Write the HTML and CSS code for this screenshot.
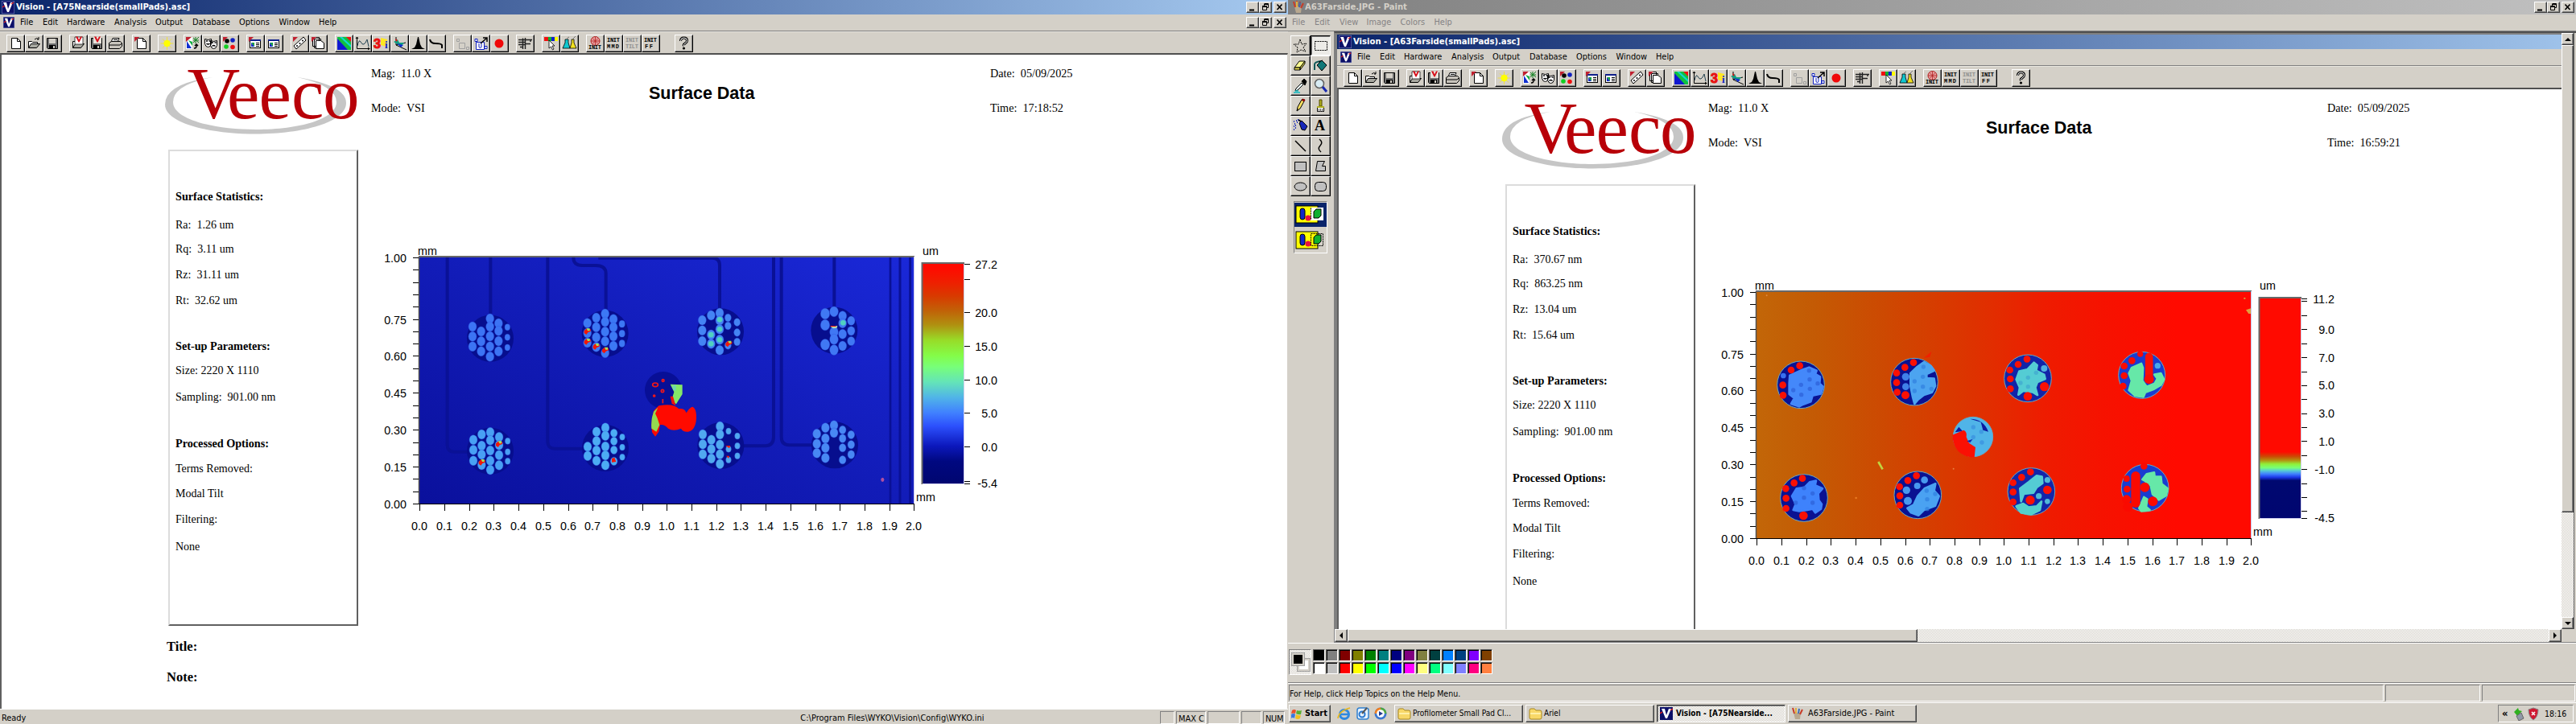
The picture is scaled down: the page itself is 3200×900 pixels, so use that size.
FILE: index.html
```html
<!DOCTYPE html>
<html lang="en">
<head>
<meta charset="utf-8">
<title>Vision and Paint</title>
<link rel="stylesheet" href="styles.css">
</head>
<body>
<div class="desktop">
  <div class="monitor" id="left-vision"></div>
  <div class="monitor">
    <div class="paint">
      <div class="titlebar inactive">
        <svg class="app-icon" viewBox="0 0 16 16"><path d="M3 7h9l-1 8H5z" fill="#b8a890"/><path d="M4 8L2 1M6 8V0M9 8l1-7M11 9l3-6" stroke-width="2" stroke="#c83c28"/><path d="M6 8V1" stroke="#e0b040" stroke-width="2"/><path d="M9 8l1-6" stroke="#3c6cb0" stroke-width="2"/></svg>
        <span class="title paint-title">A63Farside.JPG - Paint</span>
        <span class="winbtns" data-winbtns></span>
      </div>
      <div class="menubar paint-menu"><span class="m28">File</span><span class="m31">Edit</span><span class="m34">View</span><span class="m42">Image</span><span class="m42">Colors</span><span>Help</span></div>
      <div class="workspace">
        <div class="toolbox">
          <div class="tools" id="tools"></div>
          <div class="modes">
            <div class="mode on"><svg width="36" height="26" viewBox="0 0 36 26"><rect x="1" y="2" width="27" height="21" fill="#ff0" stroke="#000"/><rect x="19" y="4" width="16" height="16" fill="#fff"/><rect x="6" y="5" width="6" height="14" rx="3" fill="#1028c8" stroke="#000"/><path d="M23 9l3-3h6v8l-3 3h-6z" fill="#10b030" stroke="#000"/><circle cx="16" cy="17" r="3.6" fill="#e81040"/><path d="M19.500 4.500v15" stroke="#000" stroke-dasharray="2 1"/></svg></div>
            <div class="mode"><svg width="36" height="26" viewBox="0 0 36 26"><rect x="1" y="2" width="27" height="21" fill="#ff0" stroke="#000"/><rect x="6" y="5" width="6" height="14" rx="3" fill="#1028c8" stroke="#000"/><path d="M23 9l3-3h6v8l-3 3h-6z" fill="#10b030" stroke="#000"/><circle cx="16" cy="17" r="3.6" fill="#e81040"/><rect x="19.500" y="4.500" width="15" height="15" fill="none" stroke="#000" stroke-dasharray="2 1"/></svg></div>
          </div>
        </div>
        <div class="canvas">
          <div class="view" id="right-vision"></div>
          <div class="vscroll"><span class="sbtn"><i class="up"></i></span><span class="thumb"></span><span class="track"></span><span class="sbtn"><i class="down"></i></span></div>
          <div class="hscroll"><span class="sbtn"><i class="lt"></i></span><span class="thumb"></span><span class="track"></span><span class="sbtn"><i class="rt"></i></span></div>
          <div class="corner"></div>
        </div>
      </div>
      <div class="palette">
        <div class="current"><span class="bgc"></span><span class="fgc"></span></div>
        <div class="swatches" id="swatches"></div>
      </div>
      <div class="paint-status"><span class="help">For Help, click Help Topics on the Help Menu.</span><span class="cell a"></span><span class="cell b"></span></div>
    </div>
    <div class="taskbar">
      <div class="start"><svg width="14" height="15" viewBox="0 0 14 15"><path d="M1 3q3-2 5 0l-1 4q-2-1-5 0z" fill="#e8502c"/><path d="M7 3q3 1 6 0l-1 5q-3 1-6-1z" fill="#58b030"/><path d="M0 8q3-2 5 0l-1 5q-2-2-4 0z" fill="#3878e0"/><path d="M6 8q3 2 6 1l-1 4q-3 2-6 0z" fill="#f0c020"/></svg><b>Start</b></div>
      <div class="quick">
        <svg width="18" height="18" viewBox="0 0 18 18"><circle cx="9" cy="10" r="5.500" fill="none" stroke="#2c88e0" stroke-width="3"/><path d="M5 10h9" stroke="#2c88e0" stroke-width="2.500"/><path d="M1 15Q2 6 16 2" stroke="#e8b820" stroke-width="1.600" fill="none"/></svg>
        <svg width="18" height="18" viewBox="0 0 18 18"><rect x="2" y="2" width="14" height="14" rx="3" fill="#e8f2fc" stroke="#3080d0" stroke-width="1.500"/><circle cx="8" cy="10" r="3.500" fill="none" stroke="#2878d0" stroke-width="2"/><path d="M8 9l6-7" stroke="#555" stroke-width="2"/></svg>
        <svg width="18" height="18" viewBox="0 0 18 18"><circle cx="9" cy="9" r="7.500" fill="#3c78d0"/><path d="M9 1.500A7.500 7.500 0 0 1 16.500 9H9z" fill="#50a840"/><path d="M1.500 9A7.500 7.500 0 0 1 9 1.500V9z" fill="#f08020"/><circle cx="9" cy="9" r="4.800" fill="#fff"/><path d="M7 6l5 3-5 3z" fill="#203c90"/></svg>
      </div>
      <div class="task"><svg width="17" height="16" viewBox="0 0 17 16"><path d="M1 4q0-2 2-2h4l2 2h5q2 0 2 2v7q0 2-2 2H3q-2 0-2-2z" fill="#f8d868" stroke="#a88820"/><path d="M2 8h13" stroke="#fff0a8" stroke-width="2"/></svg><span>Profilometer Small Pad Cl...</span></div>
      <div class="task"><svg width="17" height="16" viewBox="0 0 17 16"><path d="M1 4q0-2 2-2h4l2 2h5q2 0 2 2v7q0 2-2 2H3q-2 0-2-2z" fill="#f8d868" stroke="#a88820"/><path d="M2 8h13" stroke="#fff0a8" stroke-width="2"/></svg><span>Ariel</span></div>
      <div class="task active"><svg width="16" height="16" viewBox="0 0 16 16"><rect width="16" height="16" fill="#0c1068"/><path d="M2 2h4l2 8 3-8h3L9 14H7z" fill="#fff"/><path d="M0 8l3-2M13 4l3-2" stroke="#e02020" stroke-width="1.500"/></svg><span>Vision - [A75Nearside...</span></div>
      <div class="task"><svg width="16" height="16" viewBox="0 0 16 16"><path d="M3 7h9l-1 8H5z" fill="#b8a890"/><path d="M4 8L2 1M11 9l3-6" stroke-width="2" stroke="#c83c28"/><path d="M6 8V1" stroke="#e0b040" stroke-width="2"/><path d="M9 8l1-6" stroke="#3c6cb0" stroke-width="2"/></svg><span class="reg">A63Farside.JPG - Paint</span></div>
      <div class="tray"><b>«</b><svg width="15" height="17" viewBox="0 0 15 17"><path d="M2 6l5-5 1 3 4 1-4 4-1 3z" fill="#30b020"/><path d="M5 11l6-4 3 7-6 3z" fill="#9098a8" stroke="#666"/></svg><svg width="16" height="17" viewBox="0 0 16 17"><path d="M8 1l6 2q0 9-6 13Q2 12 2 3z" fill="#d01830" stroke="#888"/><path d="M6 6l4 4M10 6l-4 4" stroke="#fff" stroke-width="1.600"/></svg><span>18:16</span></div>
    </div>
  </div>
</div>
<script src="app.js"></script>
</body>
</html>
```
FILE: styles.css
```css
* { box-sizing: border-box; }
body { margin: 0; background: #d4d0c8; }
.desktop { display: flex; width: 3200px; height: 900px; overflow: hidden; font: 10.9px/14px "DejaVu Sans Condensed", "DejaVu Sans", sans-serif; font-stretch: condensed; color: #000; }
.monitor { width: 1600px; height: 900px; overflow: hidden; flex: none; }

/* window chrome */
.titlebar { height: 18px; display: flex; align-items: center; padding: 0 2px; width: 1600px; background: linear-gradient(90deg, #0a246a, #a6caf0); color: #fff; }
.titlebar.inactive { background: linear-gradient(90deg, #808080, #c0c0c0); color: #d4d0c8; padding-left: 5px; }
.app-icon { width: 16px; height: 16px; flex: none; }
.title { font-weight: bold; font-size: 11.200px; margin-left: 2px; white-space: pre; flex: 1; }
.paint-title { margin-left: 0; }
.winbtns { display: flex; }
.wb { width: 16px; height: 14px; background: #d4d0c8; border: 1px solid; border-color: #fff #404040 #404040 #fff; box-shadow: inset -1px -1px #808080; }
.wb svg { display: block; }
.wb:last-child { margin-left: 2px; }
.menubar { height: 21px; display: flex; align-items: center; background: #d4d0c8; border-bottom: 1px solid #808080; }
.menubar span { flex: none; white-space: pre; }
.menubar .app-icon { width: 14px; height: 14px; margin: 0 7px 0 4px; }
.menubar .winbtns { margin-left: auto; margin-right: 2px; }
.m28 { width: 28px; } .m30 { width: 30px; } .m31 { width: 31px; } .m34 { width: 33.500px; } .m42 { width: 42px; }
.m59 { width: 59px; } .m51 { width: 51px; } .m46 { width: 46px; } .m58 { width: 58px; } .m50 { width: 49.500px; }
.paint-menu { color: #848284; padding-left: 5px; border-bottom-color: #808080; }

/* Vision window */
.vision { display: flex; flex-direction: column; height: 900px; background: #d4d0c8; width: 1600px; }
.toolbar { height: 27px; display: flex; padding: 3px 0 0 8px; background: #d4d0c8; border-top: 1px solid #e8e6e0; }
.group { display: flex; margin-right: 9px; }
.group.wide { margin-right: 18px; }
.tb { width: 23px; height: 22px; background: #d4d0c8; border: 1px solid; border-color: #fff #000 #000 #fff; box-shadow: inset -1px -1px #808080; }
.tb svg { display: block; margin: -1px; }
.report { flex: 1; background: #fff; border-top: 2px solid #505050; border-left: 2px solid #606060; border-right: 1px solid #d4d0c8; overflow: hidden; font-family: "Liberation Serif", serif; font-size: 14.200px; white-space: pre; }
.vision .statusbar { height: 19px; border-top: 1px solid #fff; display: flex; padding: 2px 2px 0; align-items: stretch; }
.statusbar .ready { width: 993px; } .statusbar .ini { width: 447px; letter-spacing: .05px; }
.statusbar span { line-height: 17px; white-space: pre; }
.pane { border: 1px solid; border-color: #808080 #fff #fff #808080; margin-right: 2px; padding-left: 2px; }
.p18 { width: 18px; } .p37 { width: 37px; } .p40 { width: 40px; } .p25 { width: 25px; } .p27 { width: 27px; letter-spacing: -.3px; }

.head { display: flex; height: 118px; }
.logo { flex: none; margin-left: 198px; }
.meta { width: 356px; padding: 2px 0 0 11px; line-height: 43px; flex: none; }
.heading { width: 424px; padding-top: 27px; flex: none; font: bold 21.500px/43px "Liberation Sans", sans-serif; }
.meta.when { padding-left: 0; }
.body { display: flex; height: 592px; }
.panel { width: 236px; height: 592px; margin-left: 207px; flex: none; border: 2px solid; border-color: #dcdcdc #606060 #606060 #dcdcdc; padding: 40px 0 0 7px; line-height: 32px; font-size: 14px; }
.panel b { font-size: 14.200px; }
.panel section { display: grid; }
.stats { grid-template-rows: 35.800px 30.600px 31.400px 32.600px 56px; }
.setup { grid-template-rows: 31px 32.600px 57.400px; }
.opts { grid-template-rows: 32px 31px 32px 34px 32px; }
.chart { flex: none; margin: 104px 0 0 15px; }
.chart text { font: 14.300px "Liberation Sans", sans-serif; }
.foot { margin: 7px 0 0 205px; font-size: 16.500px; font-weight: bold; line-height: 38px; }

/* Paint */
.paint { height: 873px; background: #d4d0c8; }
.workspace { display: flex; height: 760px; }
.toolbox { width: 57px; padding: 5px 0 0 3px; flex: none; }
.tools { display: grid; grid-template-columns: 25px 25px; grid-auto-rows: 25px; }
.tool { background: #d4d0c8; border: 1px solid; border-color: #fff #000 #000 #fff; box-shadow: inset -1px -1px #808080; }
.tool.on { background: #ecebe7; border-color: #000 #fff #fff #000; box-shadow: inset 1px 1px #808080; }
.tool svg { display: block; margin: -1px; }
.modes { margin: 6px 0 0 4px; width: 42px; height: 65px; border: 1px solid; border-color: #808080 #fff #fff #808080; padding-top: 1px; }
.mode { height: 30px; width: 40px; padding: 2px 0 0 1px; }
.mode.on { background: #0a246a; margin-bottom: 2px; }
.canvas { flex: 1; display: grid; grid-template-columns: 1524px 15px; grid-template-rows: 741px 16px; border-top: 2px solid #505050; border-left: 1px solid #808080; border-bottom: 1px solid #808080; }
.view { background: #808080; padding: 2px 0 0 3px; overflow: hidden; }
.vscroll { display: flex; flex-direction: column; outline: 1px solid #606060; outline-offset: 0; clip-path: inset(0 -1px 0 0); }
.hscroll { display: flex; }
.corner { background: #d4d0c8; }
.sbtn { width: 15px; height: 15px; flex: none; background: #d4d0c8; border: 1px solid; border-color: #fff #404040 #404040 #fff; box-shadow: inset -1px -1px #808080; display: grid; place-items: center; }
.hscroll .sbtn { width: 16px; height: 16px; }
.thumb { background: #d4d0c8; border: 1px solid; border-color: #fff #404040 #404040 #fff; box-shadow: inset -1px -1px #808080; flex: none; }
.vscroll .thumb { height: 581px; } .hscroll .thumb { width: 708px; }
.track { flex: 1; background: repeating-conic-gradient(#fff 0 25%, #d4d0c8 0 50%) 0 0 / 2px 2px; }
.sbtn i { border: 4px solid transparent; width: 0; height: 0; }
.sbtn .up { border-top: 0; border-bottom-color: #000; } .sbtn .down { border-bottom: 0; border-top-color: #000; }
.sbtn .lt { border-left: 0; border-right-color: #000; } .sbtn .rt { border-right: 0; border-left-color: #000; }
.palette { height: 50px; border-top: 1px solid #fff; border-bottom: 1px solid #808080; padding: 7px 0 0 1px; display: flex; }
.current { position: relative; width: 28px; height: 32px; margin-right: 2px; border: 1px solid; border-color: #808080 #fff #fff #808080; background: repeating-conic-gradient(#fff 0 25%, #d4d0c8 0 50%) 0 0 / 2px 2px; }
.fgc, .bgc { position: absolute; width: 15px; height: 15px; border: 2px solid #d4d0c8; outline: 1px solid #a0a0a0; }
.fgc { left: 3px; top: 4px; background: #000; } .bgc { left: 10px; top: 11px; background: #fff; }
.swatches { display: grid; grid-template-columns: repeat(14, 16px); grid-auto-rows: 16px; }
.swatches span { margin: 0 1px 1px 0; border: 1px solid; border-color: #606060 #fff #fff #606060; box-shadow: inset 1px 1px #000; }
.paint-status { height: 24px; border-top: 1px solid #fff; padding: 1px 1px 1px; display: flex; gap: 2px; }
.paint-status span { border: 1px solid; border-color: #808080 #fff #fff #808080; line-height: 21px; height: 21px; }
.paint-status .help { flex: 1; font-size: 10.500px; } .cell.a { width: 118px; } .cell.b { width: 116px; }
.taskbar { height: 27px; background: #d4d0c8; border-top: 1px solid #fff; display: flex; padding: 2px 3px 2px 1px; white-space: pre; }
.start { width: 52px; height: 22px; border: 1px solid; border-color: #fff #404040 #404040 #fff; box-shadow: inset -1px -1px #808080; display: flex; align-items: center; gap: 3px; padding-left: 2px; }
.quick { width: 79px; padding: 2px 0 0 8px; display: flex; gap: 4.500px; }
.task { width: 160px; height: 22px; margin-right: 3px; border: 1px solid; border-color: #fff #404040 #404040 #fff; box-shadow: inset -1px -1px #808080; display: flex; align-items: center; gap: 2px; padding-left: 3px; flex: none; font-size: 10px; }
.task svg { flex: none; }
.task.active { font-weight: bold; border-color: #404040 #fff #fff #404040; box-shadow: inset 1px 1px #808080; background: repeating-conic-gradient(#fff 0 25%, #d4d0c8 0 50%) 0 0 / 2px 2px; }
.task.active span { margin-left: 2px; }
.task .reg { font-size: 10.900px; margin-left: 3px; }
.tray { margin-left: auto; width: 94px; height: 22px; border: 1px solid; border-color: #808080 #fff #fff #808080; display: flex; align-items: center; padding-left: 4px; }
.tray svg { margin-left: 3px; } .tray b { font-size: 13px; width: 10px; } .tray span { margin-left: 6px; font-size: 10.500px; }
```
FILE: app.js
```js
const V_ICON = '<svg class="app-icon" viewBox="0 0 16 16"><rect width="16" height="16" fill="#0c1068" stroke="#8890c8"/><path d="M2 2h4l2 8 3-8h3L9 14H7z" fill="#fff"/><path d="M1 8l3-2M12 4l3-2" stroke="#e02020" stroke-width="1.500"/></svg>';
const WIN_BUTTONS =
  '<span class="wb"><svg width="14" height="12"><path d="M3 9.500h6" stroke="#000" stroke-width="2"/></svg></span>' +
  '<span class="wb"><svg width="14" height="12"><path d="M5.500 1.500h5v5h-2M5.500 2.500h5M5.500 2v3M3 4.500h5.500v5H3.500V4.500M3 5.500h5" fill="none" stroke="#000"/></svg></span>' +
  '<span class="wb"><svg width="14" height="12"><path d="M3.500 2.500l6 6.500M9.500 2.500l-6 6.500" stroke="#000" stroke-width="1.700"/></svg></span>';

/* 23x22 toolbar glyphs */
const flag = '<path d="M3 3h6L3 9z" fill="#c02030"/>';
const page = '<path d="M6.500 4.500h7l4 4v9h-11z" fill="#fff" stroke="#000"/><path d="M13.500 4.500v4h4" fill="none" stroke="#000"/>';
const folder = '<path d="M4.500 16.500v-8h4l1 1h6v2" fill="#fff" stroke="#000"/><path d="M4.500 16.500l3-5h11l-4 5z" fill="#a8a8a0" stroke="#000"/>';
const floppy = '<path d="M4.500 4.500h13v13h-12l-1-1z" fill="#707070" stroke="#000"/><path d="M7 5h8v6H7z" fill="#d4d0c8"/><path d="M7 13h8v4H7z" fill="#000"/><path d="M12 14h2v3h-2z" fill="#d4d0c8"/>';
const vmark = '<path d="M8 2.500h2.500l1.500 4 2-4H16l-3.500 7h-1z" fill="#d80c18"/>';
const list = '<rect x="4.500" y="6.500" width="13" height="10" fill="#fff" stroke="#000"/><path d="M4 6h14v2H4z" fill="#10208c"/><path d="M6 10h4v5z" fill="#10a040"/><path d="M6 10v5h4z" fill="#1028c0"/><path d="M12 10.500h4M12 12.500h4M12 14.500h4" stroke="#000"/>';
const word = (a, b, c = '#000') => `<text x="3" y="9" font-family="Liberation Mono" font-size="7" font-weight="bold" textLength="16" fill="${c}">${a}</text><text x="${b.length > 2 ? 3 : 4}" y="17" font-family="Liberation Mono" font-size="7" font-weight="bold" textLength="${b.length > 3 ? 16 : b.length * 5}" fill="${c}">${b}</text>`;
const GROUPS = [
  [page, folder + '<path d="M12 6q3-3 5 0l-2 0M17 3v3" fill="none" stroke="#000"/>', floppy],
  [folder + '<path d="M7 3h10v9H7z" fill="#fff" stroke="#000" stroke-width=".700"/>' + vmark, floppy + '<path d="M7 3h10v8H7z" fill="#e8e4dc"/>' + vmark,
    '<path d="M8 4.500h8l-2 5H6z" fill="#fff" stroke="#000"/><path d="M3.500 10.500l3-2h11l2 2v4l-3 3H3.500z" fill="#c8c4bc" stroke="#000"/><path d="M4 13h13l2-2M9 6.500h5" fill="none" stroke="#000"/>'],
  [page + flag],
  ['<path d="M11.500 3v16M3.500 11h16M6 5.500l11 11M17 5.500l-11 11" stroke="#f0e040"/><circle cx="11.500" cy="11" r="4.200" fill="#ff0"/>'],
  ['<path d="M3 3h8v15H3z" fill="#fff"/><path d="M3 3h7L3 9z" fill="#c02030"/><path d="M4 8l6 9H4z" fill="#1030d0"/><path d="M6 7l5 2v5z" fill="#10b040"/><path d="M12 4l7 6M19 3l-7 7M12 7h7M15 3v8" stroke="#108020"/><path d="M13 17q4 0 3-5M14 14l2-2 2 2" fill="none" stroke="#000" stroke-width="1.500"/>',
    '<path d="M3.500 5.500q4 2 8 0v6q-1 4-4 4t-4-4zM10.500 7.500q4 2 8 0v6q-1 4-4 4t-4-4z" fill="#fff" stroke="#000"/><path d="M5 8h2M8.500 8h2M5.500 11q2 2 4 0M12 10h2M15.500 10h2M12.500 14.500q2-2 4 0" fill="none" stroke="#000" stroke-width="1.300"/>',
    flag + '<circle cx="8" cy="8" r="2.800"/><circle cx="15" cy="7" r="2.800" fill="#1020c0"/><circle cx="7" cy="15" r="2.800" fill="#10d020"/><circle cx="15" cy="15.500" r="2.800" fill="#f01010"/>'],
  [list + flag, list],
  ['<path d="M4 14l3 4 12-11-3-4z" fill="#fff" stroke="#000"/><circle cx="8" cy="14" r="1"/><circle cx="11.500" cy="11" r="1"/><circle cx="15" cy="7.500" r="1"/>' + flag,
    '<path d="M4.500 3.500h8v11h-8zM6.500 5.500h8v11h-8z" fill="#fff" stroke="#000"/><path d="M8.500 7.500h6l4 3v7h-10z" fill="#fff" stroke="#000"/>' + flag],
  ['<rect x="3" y="3" width="17" height="16" fill="#10c040"/><path d="M3 5v14h13z" fill="#1018d0"/><path d="M3 3l3 0 14 13v-3L9 3z" fill="#10d8d0"/><path d="M14 3h6v6z" fill="#f01010"/>',
    '<path d="M4.500 3v14.500h16M3 5l1.500-2L6 5M18 16l2 1.500-2 1.500" fill="none" stroke="#000"/><path d="M5 14q2-9 4-5t4 3 4-6l2 9" fill="none" stroke="#204050"/>',
    '<path d="M11 4l8 2-1 9-7-2z" fill="#ffe820"/><text x="2" y="17" font-family="Liberation Sans" font-weight="bold" font-size="16" fill="#e81010" stroke="#e81010">3</text><text x="16" y="17" font-family="Liberation Serif" font-weight="bold" font-size="13" fill="#1020c0">i</text>',
    '<path d="M7 3v10l13 6M7 13l12-3" stroke="#000" fill="none"/><path d="M4 9l5-3 2 4 6 0-3 4-4-1z" fill="#10a080"/><path d="M6 5l3 2-2 2z" fill="#e01010"/><path d="M8 11l8 2-3 3z" fill="#1030d0"/>',
    '<path d="M3 18l4-2 2-4 2-9h1l2 9 2 4 4 2z"/>',
    '<path d="M3 6q1 5 7 5 7 0 8 2v4" fill="none" stroke="#000" stroke-width="2"/>'],
  ['<path d="M7.500 10.500h7v7h-7zM4.500 5.500h3v3h-3zM16.500 15.500h3v3h-3z" fill="none" stroke="#a0a0a0"/>',
    '<path d="M5.500 9.500h10v9h-10zM4 5.500h3v3H4zM16 14.500h3v3h-3z" fill="#fff" stroke="#1020c0"/><path d="M9 11v4q0 1.500 1.500 1.500T12 15v-4" fill="none" stroke="#1020c0"/><path d="M11 11l8-7M14 4h5v5" fill="none" stroke="#000" stroke-width="1.500"/>',
    '<circle cx="11" cy="11" r="5.500" fill="#f00808"/>'],
  ['<path d="M8.500 4.500v13.500M11.500 4v14M3 6.500h17M3 9.500h8M3 12.500h8M11 11.500h7M5 15.500h4M18 6v3" fill="none" stroke="#202020" stroke-width="1.400"/>'],
  ['<path d="M3 3h5v5H3z" fill="#f01010"/><path d="M8 3h4v5H8z" fill="#10b030"/><path d="M12 3h4v5h-4z" fill="#1020d0"/><path d="M16 3h4v5h-4z" fill="#ff0"/><path d="M9 7v10l2.500-2 2 4 1.500-1-2-4h3z" fill="#fff" stroke="#000" stroke-width=".800"/>',
    '<path d="M6 6h4v4l2 7H3l3-7z" fill="#10c8d0" stroke="#000" stroke-width=".800"/><path d="M14 6h3v4l3 7h-8l2-7z" fill="#f0e020" stroke="#000" stroke-width=".800"/><path d="M8 5l3-2M16 5l3-3" stroke="#777"/>'],
  ['<circle cx="11.500" cy="8" r="5.500" fill="#e8a0a0" stroke="#b02020"/><path d="M6 8h11M11.500 3v10M8 4.500l7 7M15 4.500l-7 7" stroke="#b02020" stroke-width=".800"/><text x="3" y="18" font-family="Liberation Mono" font-size="7" font-weight="bold" textLength="16">INIT</text>',
    word('INIT', 'MMD'), word('INIT', 'TILT', '#909090'), word('INIT', 'FF')],
  ['<path d="M7.500 8q0-4 4-4t4 3.500q0 2-2.500 3.500t-1.500 3" fill="none" stroke="#000" stroke-width="3"/><path d="M7.500 8q0-4 4-4t4 3.500q0 2-2.500 3.500t-1.500 3" fill="none" stroke="#fff"/><circle cx="11.500" cy="17" r="1.600"/>'],
];

/* Height-map drawing, coordinates in thirds of a pixel */
const circles = (pts, fill, extra = '') => pts.map(([x, y, r]) => `<circle cx="${x}" cy="${y}" r="${r || 13}" fill="${fill}" ${extra}/>`).join('');
const poly = (pts, fill) => `<polygon points="${pts}" fill="${fill}" stroke="${fill}" stroke-width="8" stroke-linejoin="round"/>`;
function bumpPad(cx, cy, cols, fill) {
  let s = `<circle cx="${cx}" cy="${cy}" r="87" fill="#070e8e"/>`;
  for (const [x, ys, r = 15] of cols)
    for (const y of ys) s += `<ellipse cx="${x}" cy="${y}" rx="${r}" ry="${r * 1.2}" fill="${fill}" stroke="#2c50e0" stroke-width="1"/>`;
  return s;
}
const hot = pts => pts.map(([x, y]) => `<path d="M${x - 12} ${y - 4}l8-8 16 2v8l-10 4-6 8-8-6z" fill="#f01808"/><path d="M${x - 3} ${y - 13}h12v9h-8z" fill="#a0e060"/>`).join('');
const green = pts => circles(pts, '#50d0c0').replace(/r="13"/g, 'r="10"');

function nearMap() {
  return `<rect x="521" y="319" width="614" height="307" fill="url(#near)"/>
  <g transform="translate(460 290) scale(.333333)" fill="none">
    <g stroke="#0a1196" stroke-width="12">
      <path d="M287 90V790Q287 815 312 815H365M448 90V300M661 90V775Q661 805 690 803H790M757 90Q757 120 790 120H840Q878 120 878 150V290"/>
      <path d="M850 92H1275Q1302 92 1302 120V370M1503 90V760Q1503 793 1470 793H1390M1532 90V760Q1532 790 1562 790H1650M1729 90V275"/>
      <path d="M1938 90V1008" stroke-width="8"/><path d="M1974 90V1008M2012 90V1008" stroke-width="9"/>
    </g>
    ${bumpPad(447, 392, [[381, [348, 385, 422]], [413, [366, 403, 440]], [446, [318, 348, 384, 422, 460]], [478, [336, 364, 402, 440]], [511, [350, 388, 426], 10]], '#3c74f4')}
    ${bumpPad(875, 374, [[809, [335, 372, 408]], [842, [315, 350, 388, 424]], [875, [300, 330, 367, 403, 446]], [906, [320, 350, 384, 420]], [938, [338, 374, 411], 11]], '#3c78f4')}
    ${hot([[809, 368], [809, 406], [842, 424], [876, 438]])}
    ${bumpPad(447, 812, [[384, [770, 808, 848]], [415, [750, 792, 825, 864]], [447, [742, 772, 810, 848, 882]], [480, [760, 790, 827, 865]], [512, [775, 815, 850], 10]], '#48a0f4')}
    ${hot([[416, 856], [480, 788]])}
    ${bumpPad(876, 801, [[810, [796, 830]], [843, [740, 775, 810, 848]], [876, [725, 755, 795, 828, 865]], [908, [745, 775, 808, 850], 13], [939, [760, 798, 835], 10]], '#4cacf4')}
    <path d="M900 840l10 -4 6 16-16 2z" fill="#f01808"/>
    <circle cx="1092" cy="585" r="69" fill="#080f96"/>
    <g stroke="#f01818" stroke-width="5"><ellipse cx="1062" cy="565" rx="10" ry="7"/><circle cx="1091" cy="549" r="4"/><circle cx="1089" cy="588" r="5"/><circle cx="1058" cy="606" r="3"/><path d="M1090 618v16"/></g>
    <path d="M1118 563L1163 565V600L1140 637L1122 625L1132 592Z" fill="#84e868"/><path d="M1118 608l10 0 10 34-14-6z" fill="#f01010"/>
    <path d="M1126 566l14 3-2 20-10-6z" fill="#70d8b0"/>
    <path d="M1075 643Q1130 632 1150 655Q1170 650 1178 670Q1190 648 1202 647Q1216 655 1215 690Q1212 735 1185 740Q1165 742 1158 728Q1130 740 1110 728Q1098 712 1080 714L1075 740L1062 758L1050 742Q1045 690 1058 660Z" fill="#ff0a00"/>
    <path d="M1072 650L1056 665Q1045 695 1048 728L1066 740L1078 715L1070 690L1062 672Z" fill="#94dc50"/>
    <g transform="translate(1170 0)">
      ${bumpPad(135, 367, [[67, [324, 362, 402]], [100, [306, 378, 412]], [132, [297, 325, 358, 397, 436]], [163, [315, 345, 418], 12], [197, [332, 370, 405], 12]], '#4484f4')}
      ${green([[100, 378], [100, 412], [132, 322], [132, 358], [132, 397]])}${hot([[166, 414]])}
      ${bumpPad(559, 362, [[525, [300, 342, 415], 17], [558, [292, 368, 395, 435], 16], [590, [308, 335, 376, 420]], [622, [326, 364, 402], 14]], '#4078f4')}
      ${green([[592, 334]])}<path d="M545 348l26-3-2 8-14 2z" fill="#b8d8b0"/><path d="M545 345h20v3h-20z" fill="#f01010"/>
      ${bumpPad(136, 792, [[69, [750, 787, 824]], [101, [770, 805, 840]], [133, [720, 750, 788, 824, 860]], [165, [738, 805, 845], 10], [198, [756, 793, 830], 10]], '#50a8f0')}
      <path d="M154 792h18l-4 10zM156 830l12 0-2 10z" fill="#f02010"/>
      ${bumpPad(561, 790, [[494, [748, 785, 820]], [526, [725, 765, 800, 838]], [558, [716, 744]], [590, [733, 765, 800, 845], 13], [622, [751, 788, 825], 13]], '#4888f4')}
      <ellipse cx="739" cy="919" rx="6" ry="8" fill="#b050a0"/>
    </g>
  </g>`;
}

const pad = (cx, cy, r = 88, fill = '#0a1292') => `<circle cx="${cx}" cy="${cy}" r="${r}" fill="${fill}" stroke="#68a8c0" stroke-width="3"/>`;
const RED = '#fa1004';
const dim = (pts, c) => `<g opacity=".7">${circles(pts, c).replace(/r="13"/g, 'r="8"')}</g>`;
function farMap() {
  return `<rect x="521" y="319" width="614" height="307" fill="url(#far)"/>
  <g transform="translate(499 287) scale(.333333)">
    ${pad(231, 445)}${poly('190,410 240,388 262,380 290,392 285,405 303,415 301,440 314,452 306,478 275,485 268,508 240,518 225,526 195,516 207,495 188,480 188,440', '#4488fa')}
    ${dim([[232, 445], [264, 425], [203, 465], [265, 460], [233, 482], [294, 440], [262, 392]], '#2c60d8')}
    ${circles([[227, 374], [195, 390], [164, 446], [165, 484]], RED)}${circles([[166, 411, 10]], '#3870f0')}
    ${pad(654, 434)}${poly('640,402 665,378 690,360 716,375 728,392 700,405 700,420 728,422 732,450 720,473 690,483 668,500 655,516 648,490 640,450', '#4ca4f0')}${circles([[622, 415, 14], [622, 452, 13]], '#4080e8')}
    ${dim([[655, 432], [686, 415], [655, 468], [686, 452], [718, 460], [688, 378]], '#3080e0')}
    ${circles([[651, 362], [619, 380], [588, 401], [588, 437], [590, 473], [621, 484, 15]], RED)}
    ${pad(1077, 421, 88, '#1224a8')}${poly('1045,395 1075,388 1100,362 1112,372 1108,392 1138,407 1142,423 1113,435 1105,455 1113,483 1095,472 1060,468 1042,482 1047,455 1034,425', '#54ccd4')}${circles([[1138, 384, 12]], '#50b0e0')}
    ${dim([[1078, 418], [1108, 400], [1050, 438], [1078, 452]], '#40a8d0')}
    ${circles([[1074, 349], [1041, 369], [1010, 390], [1012, 423], [1012, 460], [1139, 452, 17], [1077, 488, 16]], RED)}
    ${pad(873, 639, 74, '#50b4e8')}<path d="M862 572q50 0 68 48l-20-6-8-30zM806 622l14-20 14 16z" fill="#0c1aa0"/>
    <path d="M796 632L838 614Q852 620 848 640L858 662L882 678L878 716Q800 712 796 632" fill="${RED}"/><path d="M850 655l22-8-10 14z" fill="#1028b0"/>
    ${dim([[874, 603], [904, 620], [874, 640], [906, 660]], '#3890e0')}
    ${pad(243, 867)}${poly('215,832 245,828 264,808 288,803 284,820 312,832 296,850 298,875 309,890 306,908 285,922 275,908 255,912 225,916 203,912 212,890 198,860', '#3e82fc')}
    ${dim([[243, 866], [275, 850], [212, 885], [275, 885], [243, 830]], '#2c60d8')}
    ${circles([[237, 794], [206, 811], [175, 832], [176, 868], [176, 906], [241, 933, 16]], RED)}
    ${pad(667, 856)}${poly('692,832 733,814 728,840 746,860 732,896 690,912 670,932 642,922 628,905 652,892 667,860', '#4aa2f2')}${circles([[692, 800, 13], [665, 822, 12], [625, 838, 14], [630, 878, 15]], '#4898ee')}
    ${dim([[700, 840], [702, 872], [702, 908], [732, 852]], '#3080e0')}
    ${circles([[662, 784], [630, 802], [599, 825], [600, 859], [600, 894]], RED)}
    ${pad(1090, 843, 88, '#1226aa')}${poly('1048,832 1080,808 1110,784 1130,788 1132,812 1110,828 1098,848 1062,852 1052,880', '#54ccd4')}${poly('1034,898 1060,888 1080,902 1110,898 1128,880 1122,912 1090,928 1052,922', '#54d0cc')}${circles([[1118, 860, 11], [1150, 800, 11], [1150, 880, 10]], '#50b8d8')}
    ${circles([[1087, 770], [1054, 790], [1022, 810], [1022, 845], [1022, 882], [1150, 837, 16], [1086, 875, 17]], RED)}
    <path d="M520 732l16 28" stroke="#c0d440" stroke-width="8"/><circle cx="104" cy="112" r="3" fill="#e08840"/><circle cx="437" cy="867" r="4" fill="#e87820"/><circle cx="800" cy="758" r="3" fill="#e88040"/><path d="M690 345l28-24-6 20z" fill="#f02000"/>
    <g transform="translate(1200 0)">
      ${pad(302, 409, 87, '#1a3cd0')}${poly('264,382 300,366 306,382 304,430 320,452 350,440 360,422 349,407 373,402 384,425 373,446 345,462 315,473 308,490 277,486 254,465 264,430 254,402', '#66e8a8')}
      <path d="M329 340V424" stroke="${RED}" stroke-width="29" stroke-linecap="round"/>${circles([[296, 330, 11], [265, 355], [236, 375], [236, 411], [232, 450], [329, 424, 18]], '#fa0a00')}${circles([[361, 374, 11]], '#48a8e8')}
      ${pad(314, 830, 88, '#1a3cd0')}${poly('304,798 320,778 348,772 350,788 373,788 376,815 398,832 392,858 365,874 342,853 335,820 312,802', '#66e8a8')}${poly('292,905 310,864 322,872 318,900 332,912 300,916', '#66e8a8')}
      <path d="M279 785V886" stroke="#fa0a00" stroke-width="34" stroke-linecap="round"/>${circles([[245, 795, 12], [247, 834], [245, 872, 16], [313, 827, 18], [310, 748, 13], [343, 880, 18]], '#fa0a00')}${circles([[250, 900, 18]], '#fa0a00')}
      <path d="M690 166l18-6v20h-8zM682 120h6v5h-6z" fill="#e0a040"/>
    </g>
  </g>`;
}

function chart(cfg) {
  let s = `<svg class="chart" width="800" height="380" viewBox="460 290 800 380"><defs>
    <linearGradient id="near" x1="0" y1="1" x2="1" y2="0"><stop offset="0" stop-color="#0a109c"/><stop offset=".5" stop-color="#121cb8"/><stop offset="1" stop-color="#1a28d8"/></linearGradient>
    <linearGradient id="far"><stop offset="0" stop-color="#c26608"/><stop offset=".12" stop-color="#c45a04"/><stop offset=".25" stop-color="#cc4a02"/><stop offset=".38" stop-color="#d83a00"/><stop offset=".5" stop-color="#e42a00"/><stop offset=".58" stop-color="#ee1c00"/><stop offset=".7" stop-color="#f61200"/><stop offset=".85" stop-color="#ff0a00"/></linearGradient>
    <linearGradient id="bar-${cfg.key}" x2="0" y2="1">${cfg.stops.map(([o, c]) => `<stop offset="${o}" stop-color="${c}"/>`).join('')}</linearGradient></defs>`;
  s += cfg.map();
  s += '<path d="M520.500 626V319" stroke="#505050" stroke-width="1.500"/><path d="M520 319H1136" stroke="#686868" stroke-width="2"/><path d="M520 626.500H1136" stroke="#000"/><path d="M1135.500 319V626" stroke="#c8c8f0"/>';
  let t = '';
  for (let i = 0; i <= 20; i++) {
    const x = Math.round(521.3 + i * 30.7) + .5;
    t += `M${x} 626V635`;
    s += `<text x="${x - .5}" y="659" text-anchor="middle">${(i / 10).toFixed(1)}</text>`;
    const y = Math.round(626 - i * 15.3) + .5;
    t += `M513 ${y}H520`;
    if (i % 3 === 0 && i < 18 || i === 20) s += `<text x="505" y="${y + 5}" text-anchor="end">${(i / 20).toFixed(2)}</text>`;
  }
  s += `<rect x="1145" y="327" width="52" height="274" fill="url(#bar-${cfg.key})"/><path d="M1145.500 602V327H1198" fill="none" stroke="#686868" stroke-width="2"/><path d="M1197.500 328V601.500H1146" fill="none" stroke="#d0d0f0"/>`;
  for (const y of cfg.ticks) t += `M1198 ${Math.floor(y) + .5}H1205`;
  for (const [v, y] of cfg.labels) s += `<text x="1239" y="${y + 5}" text-anchor="end">${v}</text>`;
  s += `<path d="${t}" stroke="#000"/><text x="519" y="316.500">mm</text><text x="1138" y="622.500">mm</text><text x="1146" y="316.500">um</text></svg>`;
  return s;
}

const LOGO = `<svg class="logo" width="250" height="118" viewBox="200 68 250 118">
  <path d="M264.500 96Q205 104 205 130C205 153 260 166.500 318 166.500S430 152 430 128Q430 106 369.500 96Q418 107 418 127C418 148 372 161 318 161S215 148 215 127Q215 105 264.500 96Z" fill="#c6c6c6"/>
  <text x="232.500 282 321.500 362 401" y="146.500" font-family="Liberation Serif" font-size="91" fill="#b80008">Veeco</text></svg>`;

const MENU = [['File', 28], ['Edit', 30], ['Hardware', 59], ['Analysis', 51], ['Output', 46], ['Database', 58], ['Options', 50], ['Window', 50], ['Help', 28]];

function vision(cfg) {
  const tools = GROUPS.map((g, i) => `<div class="group${i === GROUPS.length - 2 ? ' wide' : ''}">${g.map(b => `<span class="tb"><svg width="23" height="22">${b}</svg></span>`).join('')}</div>`).join('');
  const [ra, rq, rz, rt] = cfg.stats;
  return `<div class="vision">
    <div class="titlebar">${V_ICON}<span class="title">Vision - [${cfg.file}]</span><span class="winbtns">${WIN_BUTTONS}</span></div>
    <div class="menubar">${V_ICON}${MENU.map(([t, w]) => `<span class="m${w}">${t}</span>`).join('')}<span class="winbtns">${WIN_BUTTONS}</span></div>
    <div class="toolbar">${tools}</div>
    <div class="report"><div class="head">${LOGO}<div class="meta"><div>Mag:  11.0 X</div><div>Mode:  VSI</div></div><div class="heading">Surface Data</div><div class="meta when"><div>Date:  05/09/2025</div><div>Time:  ${cfg.time}</div></div></div><div class="body"><div class="panel"><section class="stats"><b>Surface Statistics:</b><div>Ra:  ${ra}</div><div>Rq:  ${rq}</div><div>Rz:  ${rz}</div><div>Rt:  ${rt}</div></section><section class="setup"><b>Set-up Parameters:</b><div>Size: 2220 X 1110</div><div>Sampling:  901.00 nm</div></section><section class="opts"><b>Processed Options:</b><div>Terms Removed:</div><div>Modal Tilt</div><div>Filtering:</div><div>None</div></section></div>${chart(cfg)}</div>${cfg.footer ? '<div class="foot"><div>Title:</div><div>Note:</div></div>' : ''}</div>
    ${cfg.footer ? '<div class="statusbar"><span class="ready">Ready</span><span class="ini">C:\\Program Files\\WYKO\\Vision\\Config\\WYKO.ini</span><span class="pane p18"></span><span class="pane p37">MAX C</span><span class="pane p40"></span><span class="pane p25"></span><span class="pane p27">NUM</span></div>' : ''}
  </div>`;
}

document.getElementById('left-vision').innerHTML = vision({
  key: 'near', file: 'A75Nearside(smallPads).asc', time: '17:18:52', stats: ['1.26 um', '3.11 um', '31.11 um', '32.62 um'], map: nearMap, footer: true,
  stops: [[.02, '#ff0a00'], [.09, '#ee2000'], [.15, '#d83a00'], [.22, '#c06408'], [.28, '#b09010'], [.35, '#98dc28'], [.42, '#84fc48'], [.47, '#78ff78'], [.54, '#64e4b8'], [.61, '#50b4e8'], [.68, '#4080ff'], [.74, '#2c50fc'], [.83, '#0c18bc'], [.9, '#000880'], [1, '#000670']],
  ticks: [328.3, 347.3, 388.3, 430.3, 472.3, 513.3, 555.7, 598, 601.3],
  labels: [['27.2', 328.7], ['20.0', 388.5], ['15.0', 430.5], ['10.0', 472.5], ['5.0', 513.5], ['0.0', 555.7], ['-5.4', 600.7]],
});
document.getElementById('right-vision').innerHTML = vision({
  key: 'far', file: 'A63Farside(smallPads).asc', time: '16:59:21', stats: ['370.67 nm', '863.25 nm', '13.04 um', '15.64 um'], map: farMap, footer: false,
  stops: [[.7, '#ff0a00'], [.72, '#cc4804'], [.738, '#b49010'], [.755, '#90f038'], [.772, '#78ff78'], [.784, '#58d0d0'], [.8, '#4080ff'], [.815, '#1c38e8'], [.83, '#000870'], [1, '#000670']],
  ticks: [328, 331, 349.3, 366.7, 384.3, 401.3, 419.3, 436.3, 453.3, 471, 488.3, 505.7, 523.3, 540.7, 558, 575.3, 592.3, 601.3],
  labels: [['11.2', 328.7], ['9.0', 366.7], ['7.0', 401.5], ['5.0', 436], ['3.0', 471], ['1.0', 505.7], ['-1.0', 540.7], ['-4.5', 600.7]],
});
document.querySelector('[data-winbtns]').innerHTML = WIN_BUTTONS;

/* Paint tool glyphs, 25x25 */
const TOOLS = [
  '<path d="M12 5l2 6 6-1-4 5 3 5-6-2-5 3 1-6-5-4 6 0z" fill="none" stroke="#000" stroke-dasharray="2 1"/>',
  '<rect x="5.500" y="7.500" width="15" height="11" fill="none" stroke="#000" stroke-dasharray="2 1"/>',
  '<path d="M5 15l6-8h7l-6 8z" fill="#ffff90" stroke="#000"/><path d="M5 15h7v3H5zM12 18v-3l6-8v3z" fill="#e0d850" stroke="#000"/>',
  '<path d="M8 12l6-6 6 6-6 7z" fill="#107878" stroke="#000"/><path d="M5 18v-7q0-3 8-4" fill="none" stroke="#105858" stroke-width="2"/><path d="M10 8l5-2" stroke="#000"/>',
  '<path d="M6 19l1-3 7-7 2 2-7 7z" fill="#e8ffff" stroke="#000"/><path d="M14 7l3-3 3 3-2 5z" stroke="#000"/><path d="M4 21h8M6 19h4" stroke="#10b8c0" stroke-width="1.500"/>',
  '<circle cx="11" cy="10" r="5.500" fill="#d8ecf4" stroke="#606060" stroke-width="1.500"/><path d="M15 14l5 6" stroke="#1828b0" stroke-width="3"/>',
  '<path d="M8 19l1-5 5-9 3 2-5 9z" fill="#f8e060" stroke="#000"/><path d="M14 5l3 2 1-2-3-1z" fill="#c01010" stroke="#700"/><path d="M8 19l1-3 1 1z"/>',
  '<path d="M11 5h3v8h-3z" fill="#b0b020" stroke="#504800"/><path d="M8.500 13.500h8v6h-8z" fill="#fff" stroke="#000"/><path d="M8 13h9v2H8z" fill="#b0b020"/><path d="M10.500 16v4M12.500 16v4M14.500 16v4" stroke="#555"/>',
  '<path d="M11 9l3-3 7 7-3 5-4-1z" fill="#1828b8" stroke="#000"/><path d="M10 5l3 2" stroke="#000" stroke-width="2"/><path d="M4 7h1M7 6h1M5 10h1M8 8h1M4 13h1M6 12h1M4 17h1M6 15h1M9 5h1" stroke="#1828b8" stroke-width="2"/>',
  '<text x="5" y="18" font-family="Liberation Serif" font-weight="bold" font-size="18">A</text>',
  '<path d="M6 6l13 13" stroke="#000" stroke-width="1.500"/>',
  '<path d="M11 4q5 4 1 8t1 8" fill="none" stroke="#000" stroke-width="1.500"/>',
  '<rect x="5.500" y="7.500" width="14" height="11" fill="#c0c0c0" stroke="#000"/>',
  '<path d="M8.500 6.500h9l-3 6h4v6H6.500z" fill="#c0c0c0" stroke="#000"/>',
  '<ellipse cx="12.500" cy="13" rx="7.500" ry="5" fill="#c0c0c0" stroke="#000"/>',
  '<rect x="5.500" y="7.500" width="14" height="11" rx="4" fill="#c0c0c0" stroke="#000"/>',
];
document.getElementById('tools').innerHTML = TOOLS.map((g, i) => `<span class="tool${i === 1 ? ' on' : ''}"><svg width="25" height="25">${g}</svg></span>`).join('');
document.getElementById('swatches').innerHTML =
  '000000 808080 800000 808000 008000 008080 000080 800080 808040 004040 0080ff 004080 8000ff 804000 ffffff c0c0c0 ff0000 ffff00 00ff00 00ffff 0000ff ff00ff ffff80 00ff80 80ffff 8080ff ff0080 ff8040'
    .split(' ').map(c => `<span style="background:#${c}"></span>`).join('');
```
